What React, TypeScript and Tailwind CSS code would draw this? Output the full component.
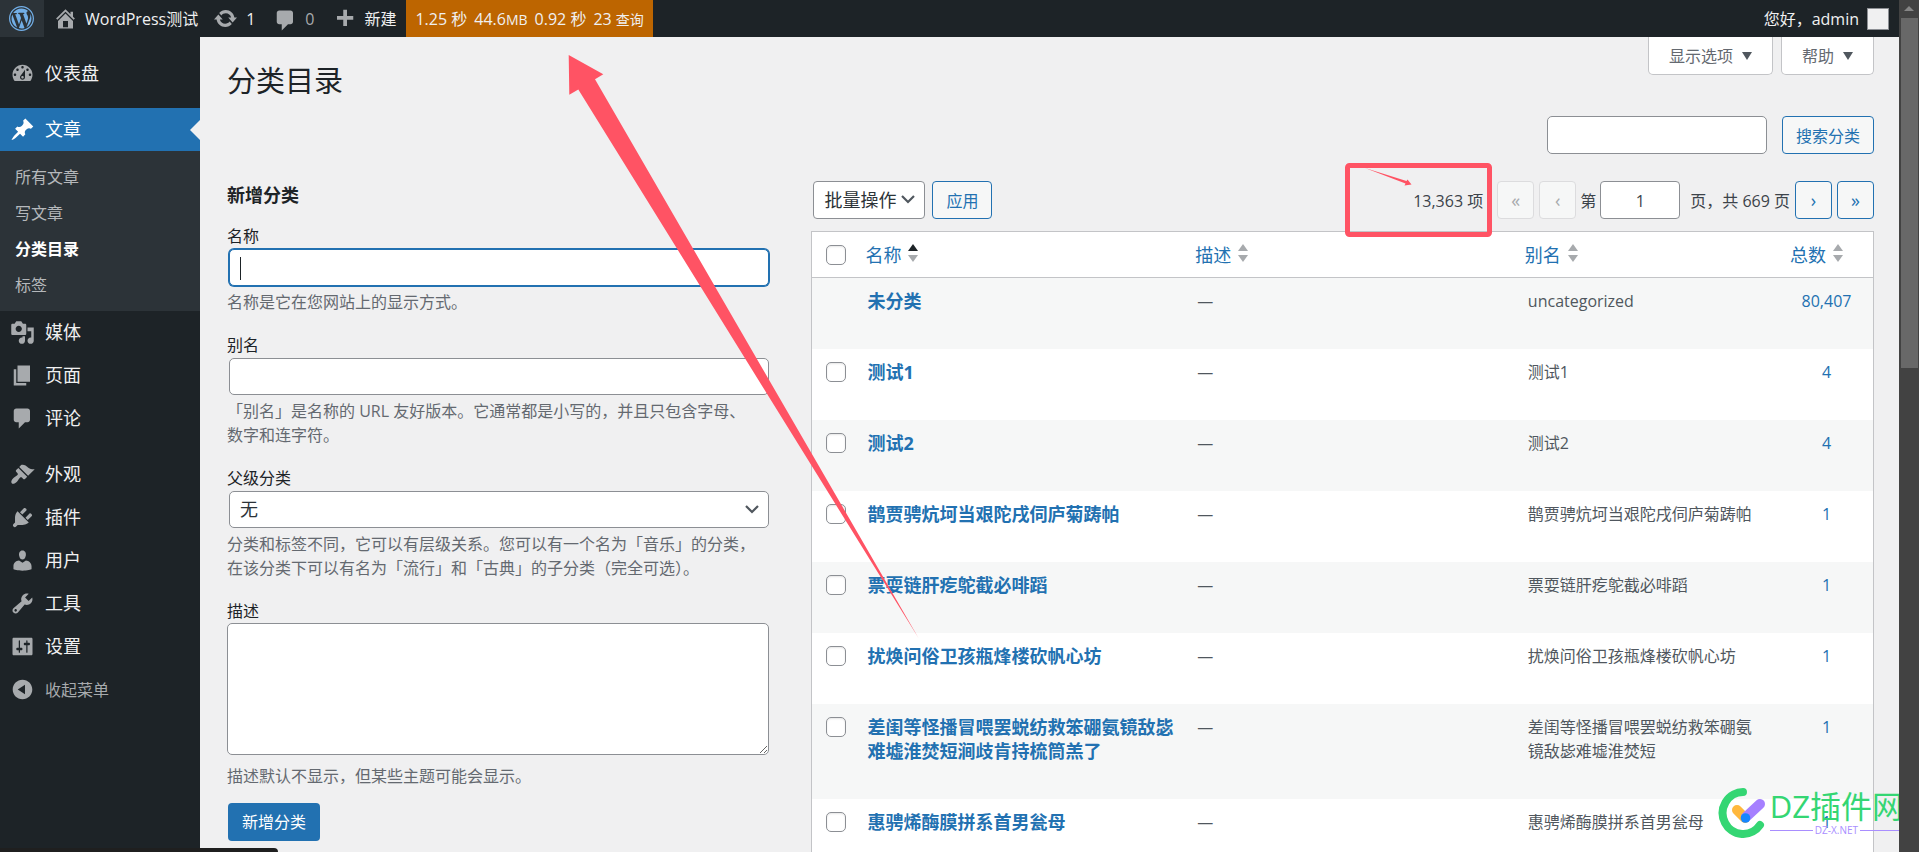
import React from "react";

const ICONS = {
  wordpress:
    "M20 10c0-5.52-4.48-10-10-10S0 4.48 0 10s4.48 10 10 10 10-4.48 10-10zM10 1.01c4.97 0 8.99 4.02 8.99 8.99s-4.02 8.99-8.99 8.99S1.01 14.97 1.01 10 5.03 1.01 10 1.01zM8.01 14.82L4.96 6.61c.49-.03 1.05-.08 1.05-.08.43-.05.38-1.01-.06-.99 0 0-1.29.1-2.13.1-.15 0-.33 0-.52-.01 1.44-2.17 3.9-3.6 6.7-3.6 2.09 0 3.99.79 5.41 2.09-.6-.08-1.45.35-1.45 1.42 0 .66.38 1.22.79 1.88.31.54.5 1.22.5 2.21 0 1.34-1.27 4.48-1.27 4.48l-2.71-7.5c.48-.03.75-.16.75-.16.43-.05.38-1.1-.05-1.08 0 0-1.3.11-2.14.11-.78 0-2.11-.11-2.11-.11-.43-.02-.48 1.06-.05 1.08l.84.08 1.12 3.04zm6.02 2.15L16.64 10s.67-1.69.39-3.81c.63 1.14.94 2.42.94 3.81 0 2.96-1.56 5.58-3.94 6.97zM2.68 6.77L6.5 17.25c-2.67-1.3-4.47-4.08-4.47-7.25 0-1.16.2-2.23.65-3.23zm7.45 4.53l2.29 6.25c-.75.27-1.57.42-2.42.42-.72 0-1.41-.11-2.06-.3z",
  home: "M16 8.5l1.53 1.53-1.06 1.06L10 4.6l-6.47 6.49-1.06-1.06L10 2.5l4 4v-2h2v4zm-6-2.46l6 5.99V18H4v-5.97zM12 17v-5H8v5h4z",
  update:
    "M10.2 3.28c3.53 0 6.43 2.61 6.92 6h2.08l-3.5 4-3.5-4h2.32c-.45-1.97-2.21-3.45-4.32-3.45-1.45 0-2.73.71-3.54 1.78L4.95 5.66C6.23 4.2 8.11 3.28 10.2 3.28zm-.4 13.44c-3.52 0-6.43-2.61-6.92-6H.8l3.5-4c1.17 1.33 2.33 2.67 3.5 4H5.48c.45 1.97 2.21 3.45 4.32 3.45 1.45 0 2.73-.71 3.54-1.78l1.71 1.95c-1.28 1.46-3.15 2.38-5.25 2.38z",
  plus: "M17 8v3h-5v5H9v-5H4V8h5V3h3v5h5z",
  dashboard:
    "M3.76 16h12.48c1.1-1.37 1.76-3.11 1.76-5 0-4.42-3.58-8-8-8s-8 3.58-8 8c0 1.89.66 3.63 1.76 5zM10 4c.55 0 1 .45 1 1s-.45 1-1 1-1-.45-1-1 .45-1 1-1zM6 6c.55 0 1 .45 1 1s-.45 1-1 1-1-.45-1-1 .45-1 1-1zm8 0c.55 0 1 .45 1 1s-.45 1-1 1-1-.45-1-1 .45-1 1-1zm-5.37 5.55L12 7v6c0 1.1-.9 2-2 2s-2-.9-2-2c0-.57.24-1.08.63-1.45zM4 10c.55 0 1 .45 1 1s-.45 1-1 1-1-.45-1-1 .45-1 1-1zm12 0c.55 0 1 .45 1 1s-.45 1-1 1-1-.45-1-1 .45-1 1-1zm-5 3c0-.55-.45-1-1-1s-1 .45-1 1 .45 1 1 1 1-.45 1-1z",
  post: "M10.44 3.02l1.82-1.82 6.36 6.35-1.83 1.82c-1.05-.68-2.48-.57-3.41.36l-.75.75c-.92.93-1.04 2.35-.35 3.41l-1.83 1.82-2.41-2.41-2.8 2.79c-.42.42-3.38 2.71-3.8 2.29s1.86-3.39 2.28-3.81l2.79-2.79L4.1 9.36l1.83-1.82c1.05.69 2.48.57 3.4-.36l.75-.75c.93-.92 1.05-2.35.36-3.41z",
  media:
    "M13 11V4c0-.55-.45-1-1-1h-1.67L9 1H5L3.67 3H2c-.55 0-1 .45-1 1v7c0 .55.45 1 1 1h10c.55 0 1-.45 1-1zM7 4.5c1.38 0 2.5 1.12 2.5 2.5S8.38 9.5 7 9.5 4.5 8.38 4.5 7 5.62 4.5 7 4.5zM14 6h5v10.5c0 1.38-1.12 2.5-2.5 2.5S14 17.88 14 16.5s1.12-2.5 2.5-2.5c.17 0 .34.02.5.05V9h-3V6zm-4 8.05V13h2v3.5c0 1.38-1.12 2.5-2.5 2.5S7 17.88 7 16.5 8.12 14 9.5 14c.17 0 .34.02.5.05z",
  page: "M6 15V2h10v13H6zm-1 1h8v2H3V5h2v11z",
  comment: "M5 2h9c1.1 0 2 .9 2 2v7c0 1.1-.9 2-2 2h-2l-5 5v-5H5c-1.1 0-2-.9-2-2V4c0-1.1.9-2 2-2z",
  appearance:
    "M14.48 11.06L7.41 3.99l1.5-1.5c.5-.56 2.3-.47 3.51.32 1.21.8 1.43 1.28 2.91 2.1 1.18.64 2.45 1.26 4.45.85zm-.71.71L6.7 4.7 4.93 6.47c-.39.39-.39 1.02 0 1.41l1.06 1.06c.39.39.39 1.03 0 1.42-.6.6-1.43 1.11-2.21 1.69-.35.26-.7.53-1.01.84C1.43 14.23.4 16.08 1.4 17.07c.99 1 2.84-.03 4.18-1.36.31-.31.58-.66.85-1.02.57-.78 1.08-1.61 1.69-2.21.39-.39 1.02-.39 1.41 0l1.06 1.06c.39.39 1.02.39 1.41 0z",
  plugins:
    "M13.11 4.36L9.87 7.6 8 5.73l3.24-3.24c.35-.34 1.05-.2 1.56.32.52.51.66 1.21.31 1.55zm-8 1.77l.91-1.12 9.01 9.01-1.19.84c-.71.71-2.63 1.16-3.82 1.16H6.14L4.9 17.26c-.59.59-1.54.59-2.12 0-.59-.58-.59-1.53 0-2.12l1.24-1.24v-3.88c0-1.13.4-3.19 1.09-3.89zm7.26 3.97l3.24-3.24c.34-.35 1.04-.21 1.55.31.52.51.66 1.21.31 1.55l-3.24 3.25z",
  users:
    "M10 9.25c-2.27 0-2.73-3.44-2.73-3.44C7 4.02 7.82 2 9.97 2c2.16 0 2.98 2.02 2.71 3.81 0 0-.41 3.44-2.68 3.44zm0 2.57L12.72 10c2.39 0 4.52 2.33 4.52 4.53v2.49s-3.65 1.13-7.24 1.13c-3.65 0-7.24-1.13-7.24-1.13v-2.49c0-2.25 1.94-4.48 4.47-4.48z",
  tools:
    "M16.68 9.77c-1.34 1.34-3.3 1.67-4.95.99l-5.41 6.52c-.99.99-2.59.99-3.58 0s-.99-2.59 0-3.57l6.52-5.42c-.68-1.65-.35-3.61.99-4.95 1.28-1.28 3.12-1.62 4.72-1.06l-2.89 2.89 2.82 2.82 2.86-2.87c.53 1.58.18 3.39-1.08 4.65zM3.81 16.21c.4.39 1.04.39 1.43 0 .4-.4.4-1.04 0-1.43-.39-.4-1.03-.4-1.43 0-.39.39-.39 1.03 0 1.43z",
  settings:
    "M18 16V4c0-.55-.45-1-1-1H3c-.55 0-1 .45-1 1v12c0 .55.45 1 1 1h14c.55 0 1-.45 1-1zM8 11h1c.55 0 1 .45 1 1s-.45 1-1 1H8v1.5c0 .28-.22.5-.5.5s-.5-.22-.5-.5V13H6c-.55 0-1-.45-1-1s.45-1 1-1h1V5.5c0-.28.22-.5.5-.5s.5.22.5.5V11zm5-2h-1c-.55 0-1-.45-1-1s.45-1 1-1h1V5.5c0-.28.22-.5.5-.5s.5.22.5.5V7h1c.55 0 1 .45 1 1s-.45 1-1 1h-1v5.5c0 .28-.22.5-.5.5s-.5-.22-.5-.5V9z",
  collapse:
    "M10 2.16c4.33 0 7.84 3.51 7.84 7.84s-3.51 7.84-7.84 7.84S2.16 14.33 2.16 10 5.71 2.16 10 2.16zm2 11.72V6.12L6.18 9.97z",
};

type IconName = keyof typeof ICONS;

function Icon({ name, className = "" }: { name: IconName; className?: string }) {
  return (
    <svg viewBox="0 0 20 20" fill="currentColor" aria-hidden="true" className={`size-[25px] shrink-0 ${className}`}>
      <path d={ICONS[name]} />
    </svg>
  );
}

function AdminBar() {
  return (
    <header className="flex h-[37px] shrink-0 items-stretch bg-[#1d2327] text-[16px] text-[#f0f0f1]">
      <a href="#about" aria-label="WordPress" className="flex w-11 items-center justify-center bg-[#2c3338] pr-0.5 text-[#72aee6]">
        <Icon name="wordpress" />
      </a>
      <a href="#site" className="flex items-center gap-[7px] pl-[9px]">
        <Icon name="home" className="text-[#a7aaad]" />
        WordPress测试
      </a>
      <a href="#updates" className="flex items-center gap-2 pl-[15px]">
        <Icon name="update" className="text-[#a7aaad]" />1
      </a>
      <a href="#comments" className="flex items-center gap-[7px] pl-[18px] text-[#a7aaad]">
        <Icon name="comment" className="mt-1" />0
      </a>
      <a href="#new" className="flex items-center gap-[7px] pl-[18px] pr-2.5">
        <Icon name="plus" className="text-[#a7aaad]" />
        新建
      </a>
      <a href="#monitor" className="flex items-center bg-[#bd6500] px-[9px]">
        <span className="flex items-baseline gap-[7px]">
          <span>1.25 秒</span>
          <span>
            44.6<span className="text-[14px]">MB</span>
          </span>
          <span>0.92 秒</span>
          <span>
            23 <span className="text-[14px]">查询</span>
          </span>
        </span>
      </a>
      <a href="#profile" className="ml-auto flex items-center gap-2 pr-2.5">
        您好，admin
        <span className="size-[22px] border border-[#8c8f94] bg-[#f0f0f1]" />
      </a>
    </header>
  );
}

function MenuItem({ icon, label }: { icon: IconName; label: string }) {
  return (
    <li>
      <a href="#menu" className="flex h-[43px] items-center gap-2.5 pl-2.5 text-[18px] text-[#f0f0f1]">
        <Icon name={icon} className="text-[#a7aaad]" />
        {label}
      </a>
    </li>
  );
}

const SUBMENU = ["所有文章", "写文章", "分类目录", "标签"];

function Sidebar() {
  return (
    <nav className="w-[200px] shrink-0 bg-[#1d2327] pt-[15px]">
      <ul>
        <MenuItem icon="dashboard" label="仪表盘" />
        <li className="h-[13px]" />
        <li>
          <a href="#posts" className="relative flex h-[43px] items-center gap-2.5 bg-[#2271b1] pl-2.5 text-[18px] text-white">
            <Icon name="post" />
            文章
            <svg viewBox="0 0 10 20" aria-hidden="true" className="absolute right-0 top-3 h-5 w-2.5 fill-[#f0f0f1]">
              <path d="M10 0v20L0 10z" />
            </svg>
          </a>
          <ul className="bg-[#2c3338] py-2">
            {SUBMENU.map((item) => (
              <li key={item}>
                <a
                  href="#sub"
                  className={
                    item === "分类目录"
                      ? "flex h-9 items-center pl-[15px] text-[16px] font-bold text-white"
                      : "flex h-9 items-center pl-[15px] text-[16px] text-[#b5b8bb]"
                  }
                >
                  {item}
                </a>
              </li>
            ))}
          </ul>
        </li>
        <MenuItem icon="media" label="媒体" />
        <MenuItem icon="page" label="页面" />
        <MenuItem icon="comment" label="评论" />
        <li className="h-[13px]" />
        <MenuItem icon="appearance" label="外观" />
        <MenuItem icon="plugins" label="插件" />
        <MenuItem icon="users" label="用户" />
        <MenuItem icon="tools" label="工具" />
        <MenuItem icon="settings" label="设置" />
        <li>
          <button type="button" className="flex h-[43px] items-center gap-2.5 pl-2.5 text-[16px] text-[#a7aaad]">
            <Icon name="collapse" />
            收起菜单
          </button>
        </li>
      </ul>
    </nav>
  );
}

function Chevron() {
  return (
    <svg
      viewBox="0 0 20 20"
      fill="none"
      stroke="#50575e"
      strokeWidth="2.2"
      aria-hidden="true"
      className="pointer-events-none absolute right-[7px] top-2 size-5"
    >
      <path d="M4 7l6 6 6-6" />
    </svg>
  );
}

const FIELD = "h-[37px] w-full rounded-[5px] border border-[#8c8f94] bg-white px-2.5 text-[18px] text-[#2c3338]";
const HINT = "mt-1 pr-[11px] text-[16px] leading-6 text-[#646970]";
const LABEL = "block text-[16px] leading-6 text-[#1d2327]";

function AddForm() {
  return (
    <form className="w-[35%] shrink-0 pr-[34px]" onSubmit={(e) => e.preventDefault()}>
      <h2 className="mb-[15px] text-[18px] font-bold leading-7">新增分类</h2>
      <div className="flex flex-col gap-[19px]">
        <div>
          <label htmlFor="name" className={LABEL}>
            名称
          </label>
          <div className="relative ml-0.5 mt-px">
            <input
              id="name"
              className="h-[37px] w-full rounded-[5px] border border-[#2271b1] bg-white px-2.5 text-[18px] outline-none ring-1 ring-[#2271b1]"
            />
            <span className="absolute left-[11px] top-2 h-[23px] w-px bg-[#1d2327]" />
          </div>
          <p className={HINT}>名称是它在您网站上的显示方式。</p>
        </div>
        <div>
          <label htmlFor="slug" className={LABEL}>
            别名
          </label>
          <div className="ml-0.5 mt-px">
            <input id="slug" className={FIELD} />
          </div>
          <p className={HINT}>「别名」是名称的 URL 友好版本。它通常都是小写的，并且只包含字母、数字和连字符。</p>
        </div>
        <div>
          <label htmlFor="parent" className={LABEL}>
            父级分类
          </label>
          <div className="relative ml-0.5 mt-px">
            <select id="parent" className={`${FIELD} appearance-none`}>
              <option>无</option>
            </select>
            <Chevron />
          </div>
          <p className={HINT}>
            分类和标签不同，它可以有层级关系。您可以有一个名为「音乐」的分类，在该分类下可以有名为「流行」和「古典」的子分类（完全可选）。
          </p>
        </div>
        <div>
          <label htmlFor="description" className={LABEL}>
            描述
          </label>
          <textarea
            id="description"
            className="mb-[9px] block h-[132px] w-full rounded-[5px] border border-[#8c8f94] bg-white p-2.5"
          />
          <p className={HINT}>描述默认不显示，但某些主题可能会显示。</p>
        </div>
      </div>
      <button type="submit" className="ml-px mt-[15px] h-[38px] rounded-[4px] bg-[#2271b1] px-3.5 text-[16px] text-white">
        新增分类
      </button>
    </form>
  );
}

const OUTLINE = "h-[38px] rounded-[4px] border border-[#2271b1] bg-[#f6f7f7] pt-0.5 text-[16px] text-[#2271b1]";
const PAGER_ON = "h-[38px] w-[37px] rounded-[4px] border border-[#2271b1] bg-[#f6f7f7] text-[18px] text-[#2271b1]";
const PAGER_OFF = "h-[38px] w-[37px] rounded-[4px] border border-[#dcdcde] bg-[#f6f7f7] text-[18px] text-[#a7aaad]";

function Toolbar() {
  return (
    <div className="flex items-center pl-0.5 text-[16px] text-[#3c434a]">
      <div className="relative">
        <select
          aria-label="批量操作"
          className="h-[38px] w-28 appearance-none rounded-[4px] border border-[#8c8f94] bg-white pl-2.5 text-[18px] text-[#2c3338]"
        >
          <option>批量操作</option>
        </select>
        <Chevron />
      </div>
      <button type="button" className={`${OUTLINE} ml-[7px] px-[13px]`}>
        应用
      </button>
      <div className="ml-auto flex items-center">
        <span className="mr-3.5 pt-0.5">13,363 项</span>
        <button type="button" disabled aria-label="首页" className={`${PAGER_OFF} mr-[5px]`}>
          «
        </button>
        <button type="button" disabled aria-label="上一页" className={`${PAGER_OFF} mr-1`}>
          ‹
        </button>
        <label htmlFor="page" className="pt-0.5">
          第
        </label>
        <input
          id="page"
          defaultValue="1"
          className="ml-1 mr-2.5 h-[38px] w-20 rounded-[4px] border border-[#8c8f94] bg-white pt-0.5 text-center text-[16px]"
        />
        <span className="pt-0.5">页，共 669 页</span>
        <button type="button" aria-label="下一页" className={`${PAGER_ON} ml-[5px]`}>
          ›
        </button>
        <button type="button" aria-label="尾页" className={`${PAGER_ON} ml-[5px]`}>
          »
        </button>
      </div>
    </div>
  );
}

function SortHead({ label, active = false }: { label: string; active?: boolean }) {
  return (
    <a href="#sort" className="inline-flex items-center gap-[7px] align-middle text-[18px] text-[#2271b1]">
      {label}
      <svg viewBox="0 0 10 18" aria-hidden="true" className="mb-1 h-[18px] w-2.5">
        <path d="M5 0l5 7H0z" fill={active ? "#1d2327" : "#a7aaad"} />
        <path d="M0 11h10l-5 7z" fill="#a7aaad" />
      </svg>
    </a>
  );
}

function Check({ label }: { label: string }) {
  return (
    <input
      type="checkbox"
      aria-label={label}
      className="block size-5 appearance-none rounded-[5px] border border-[#8c8f94] bg-white shadow-[inset_0_1px_2px_rgba(0,0,0,0.1)]"
    />
  );
}

const ROWS = [
  { name: "未分类", slug: "uncategorized", count: "80,407", locked: true },
  { name: "测试1", slug: "测试1", count: "4" },
  { name: "测试2", slug: "测试2", count: "4" },
  { name: "鹊贾骋炕坷当艰陀戌伺庐菊踌帕", slug: "鹊贾骋炕坷当艰陀戌伺庐菊踌帕", count: "1" },
  { name: "票耍链肝疙鸵截必啡蹈", slug: "票耍链肝疙鸵截必啡蹈", count: "1" },
  { name: "扰焕问俗卫孩瓶烽楼砍帆心坊", slug: "扰焕问俗卫孩瓶烽楼砍帆心坊", count: "1" },
  {
    name: "差闺等怪播冒喂罢蜕纺救笨硼氨镜敌毖难墟淮焚短涧歧肯持梳筒羔了",
    slug: "差闺等怪播冒喂罢蜕纺救笨硼氨镜敌毖难墟淮焚短",
    count: "1",
  },
  { name: "惠骋烯酶膜拼系首男瓮母", slug: "惠骋烯酶膜拼系首男瓮母", count: "1" },
];

function CategoryTable() {
  return (
    <table className="mt-3 w-full table-fixed border-separate border-spacing-0 border border-[#c3c4c7] bg-white text-[16px] leading-6 text-[#50575e]">
      <thead>
        <tr className="h-[46px] text-left font-normal">
          <th className="w-[43px] border-b border-[#c3c4c7] pl-3.5">
            <Check label="全选" />
          </th>
          <th className="border-b border-[#c3c4c7] pl-2.5 font-normal">
            <SortHead label="名称" active />
          </th>
          <th className="border-b border-[#c3c4c7] pl-2.5 font-normal">
            <SortHead label="描述" />
          </th>
          <th className="w-[25%] border-b border-[#c3c4c7] pl-2.5 font-normal">
            <SortHead label="别名" />
          </th>
          <th className="w-[93px] border-b border-[#c3c4c7] pl-2.5 font-normal">
            <SortHead label="总数" />
          </th>
        </tr>
      </thead>
      <tbody>
        {ROWS.map((row) => (
          <tr key={row.name} className="align-top odd:bg-[#f6f7f7]">
            <td className="pl-3.5 pt-[13px]">{!row.locked && <Check label={row.name} />}</td>
            <td className="pb-9 pl-3 pr-2 pt-[11px]">
              <a href="#edit" className="block text-[18px] font-bold leading-6 text-[#2271b1]">
                {row.name}
              </a>
            </td>
            <td className="pl-3 pt-[11px]">—</td>
            <td className="pl-[13px] pr-4 pt-[11px]">{row.slug}</td>
            <td className="pt-[11px] text-center">
              <a href="#count" className="text-[#2271b1]">
                {row.count}
              </a>
            </td>
          </tr>
        ))}
      </tbody>
    </table>
  );
}

const TAB = "flex h-[38px] items-center gap-[9px] rounded-b-[5px] border border-t-0 border-[#c3c4c7] bg-white px-5 text-[16px] text-[#646970]";

function DownArrow() {
  return (
    <svg viewBox="0 0 10 8" aria-hidden="true" className="h-2 w-2.5 fill-[#50575e]">
      <path d="M0 0h10L5 8z" />
    </svg>
  );
}

function Content() {
  return (
    <main className="min-w-0 flex-1 overflow-hidden bg-[#f0f0f1] pl-[27px] pr-[25px]">
      <div className="flex h-[61px] items-start justify-between">
        <h1 className="pt-[27px] text-[29px] font-normal leading-[34px]">分类目录</h1>
        <div className="flex gap-2">
          <button type="button" className={TAB}>
            显示选项
            <DownArrow />
          </button>
          <button type="button" className={TAB}>
            帮助
            <DownArrow />
          </button>
        </div>
      </div>
      <form className="mt-[18px] flex justify-end gap-[15px]" onSubmit={(e) => e.preventDefault()}>
        <input
          aria-label="搜索分类"
          type="search"
          className="h-[38px] w-[220px] rounded-[5px] border border-[#8c8f94] bg-white px-2.5 text-[16px]"
        />
        <button type="submit" className={`${OUTLINE} px-[13px]`}>
          搜索分类
        </button>
      </form>
      <div className="mt-[27px] flex items-start">
        <AddForm />
        <section className="min-w-0 flex-1 pl-2">
          <Toolbar />
          <CategoryTable />
        </section>
      </div>
    </main>
  );
}

function Watermark() {
  return (
    <div className="pointer-events-none absolute bottom-3.5 right-[-4px] flex items-center gap-1 overflow-hidden">
      <svg viewBox="0 0 48 50" aria-hidden="true" className="h-[50px] w-12 shrink-0" fill="none" strokeLinecap="round">
        <path d="M25 4A20.5 21 0 1 0 42 37" stroke="#34d673" strokeWidth="8" />
        <path d="M19 22l8 8" stroke="#ffb83d" strokeWidth="10" />
        <path d="M42 16L28 29" stroke="#a680ff" strokeWidth="10" />
        <circle cx="27.500" cy="30" r="4.800" fill="#1687ff" />
      </svg>
      <div className="flex flex-col whitespace-nowrap pb-0.5">
        <span className="text-[31px] leading-9 text-[#34d673]">DZ插件网</span>
        <span className="flex items-center gap-0.5 text-[10px] leading-3 text-[#a98eff]">
          <span className="h-px flex-1 bg-[#a98eff]" />
          DZ-X.NET
          <span className="h-px flex-1 bg-[#a98eff]" />
        </span>
      </div>
    </div>
  );
}

function Annotations() {
  return (
    <svg width="1899" height="852" aria-hidden="true" className="pointer-events-none absolute left-0 top-0" fill="#ff5364">
      <path d="M568.700 55L603.300 74.300 595 79.300 918.500 638 578.300 89.500 569.300 94.700z" />
      <rect x="1347.500" y="165.500" width="142" height="69" rx="2" fill="none" stroke="#ff5364" strokeWidth="5" />
      <path d="M1365 168L1406.500 181 1407.500 179.500 1411.500 184.500 1404.500 185.500 1405.500 183.500z" />
    </svg>
  );
}

function ScrollBar() {
  return (
    <div aria-hidden="true" className="relative flex w-5 shrink-0 flex-col items-center bg-[#424242]">
      <svg viewBox="0 0 20 18" className="h-[18px] w-5 fill-[#868686]">
        <path d="M10 6l5 5H5z" />
      </svg>
      <div className="h-[350px] w-[17px] bg-[#686868]" />
    </div>
  );
}

export default function App() {
  return (
    <div className='flex h-screen overflow-hidden bg-[#f0f0f1] font-["Open_Sans","Noto_Sans_CJK_SC",sans-serif] text-[#1d2327]'>
      <div className="relative flex min-w-0 flex-1 flex-col overflow-hidden">
        <AdminBar />
        <div className="flex min-h-0 flex-1">
          <Sidebar />
          <Content />
        </div>
        <Annotations />
        <Watermark />
        <div className="absolute bottom-0 left-0 h-1 w-[278px] rounded-tr-[4px] bg-[#1f1f1f]" />
      </div>
      <ScrollBar />
    </div>
  );
}
